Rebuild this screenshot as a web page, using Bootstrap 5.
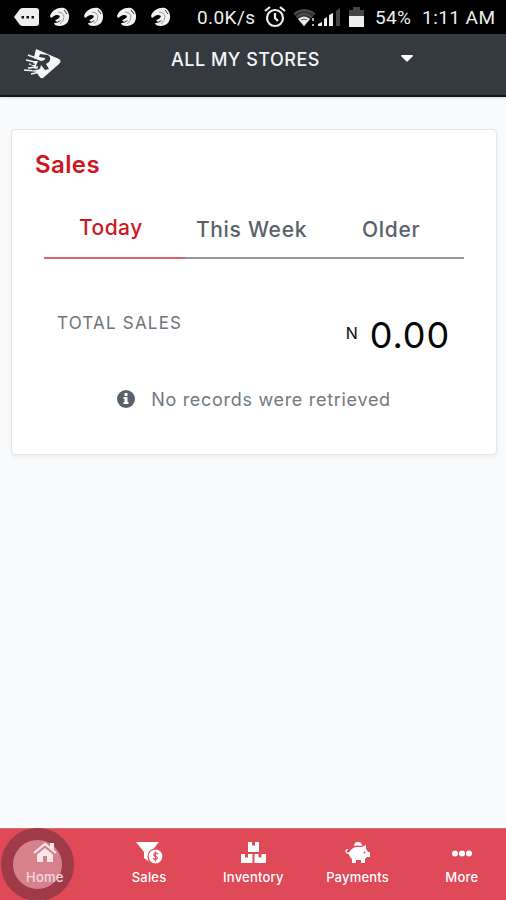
<!DOCTYPE html>
<html lang="en">
<head>
<meta charset="utf-8">
<meta name="viewport" content="width=device-width, initial-scale=1">
<title>Sales</title>
<link rel="stylesheet" href="https://cdn.jsdelivr.net/npm/bootstrap@5.3.0/dist/css/bootstrap.min.css">
<style>
body{font-family:Inter,"Open Sans",sans-serif;background:#f8fafc;line-height:1}
.screen{width:506px;height:900px}
svg{display:block;flex:none}
.status{height:34px;background:#000;color:#eee;font:19px/38px Roboto,sans-serif;padding-left:14px}
.status span{flex:none;padding-top:2px}
.speed{width:67px;margin-left:26px;letter-spacing:.4px}
.battery{width:47px;letter-spacing:.3px}
.clock{letter-spacing:.45px}
.topbar{height:63px;background:#343a40;border-bottom:2px solid #111519;color:#f5f6f7;padding-left:23px;box-shadow:0 1px 3px #0002}
.store{width:230px;margin-left:109px;font-size:18px;font-weight:450;letter-spacing:.5px;line-height:51px}
.panel{margin:32px 9px 0 11px;height:326px;border:1px solid #e3e5e7;border-radius:4px;box-shadow:0 2px 4px #0000000d}
.panel-title{color:#cf1620;font-size:24px;font-weight:600;letter-spacing:.4px;line-height:30px;padding:20px 0 0 23px;margin:0}
.periods{margin:22px 32px 0;height:57px}
.periods button{flex:1;border:0;border-bottom:2px solid #969a9e;background:none;color:#59616b;font-size:21px;font-weight:550;letter-spacing:.7px;padding:0 6px 0 0;white-space:nowrap}
.periods button.active{border-color:#d9636e;color:#cf1620;padding:0 7px 5px 0;letter-spacing:.5px}
.total{height:80px;margin-top:37px;padding:0 47px 0 45px}
.total-label{font-size:17px;color:#6c747c;line-height:54px;letter-spacing:1.2px}
.total-value{color:#060606;font-size:36px;line-height:79px;letter-spacing:.9px;margin-right:-1px}
.currency{font-size:16px;line-height:75px;margin-right:12px;color:#060606}
.notice{margin-top:14px;color:#737980;font-size:18px;line-height:20px;letter-spacing:.7px}
.tabs{height:72px;background:#e04958;border-top:1px solid #d66b76;color:#fff;overflow:hidden}
.tabs a{flex:0 0 104.25px;color:#fff;text-decoration:none;font-size:13px;font-weight:500;line-height:16px;letter-spacing:.2px;padding-top:12px;z-index:2}
.tabs a:first-child{margin-left:-7.3px;color:#eddcdf}
.tabs svg{margin-bottom:5px}
.touch{left:1px;bottom:-1px;width:73px;height:73px;border:12px solid #9f3b48;background:#d7818d;border-radius:50%;z-index:1}
</style>
</head>
<body>
<div class="screen d-flex flex-column position-relative overflow-hidden">
<svg width="0" height="0" class="position-absolute"><defs>
<g id="bird"><path d="M0 9C2 3 8 0 14 1C19 3 21 11 17 16C14 19 9 20 5 18L4 16Q9 16 11 13L7 15L5 13Q9 12 10 9Q7 7 4 9L1 11Z" fill="#f1f1f1"/><path d="M8 5Q13 5 14 9Q14 14 10 17" fill="none" stroke="#888" stroke-width=".8"/><path d="M14 3L17 7" stroke="#333"/></g>
</defs></svg>
<div class="status d-flex align-items-center">
<svg width="25" height="20" viewBox="0 0 25 20"><path d="M0 10L6 2Q7 1 9 1H22Q25 1 25 4V16Q25 19 22 19H9Q7 19 6 18Z" fill="#eee"/><path d="M7.5 9h2.500v2.500h-2.500zM12.500 9h2.500v2.500h-2.500zM17.500 9h2.500v2.500h-2.500z" fill="#111"/></svg>
<svg width="122" height="20" style="margin-left:11px"><use href="#bird"/><use href="#bird" x="34"/><use href="#bird" x="67"/><use href="#bird" x="101"/></svg>
<span class="speed" style="margin-left:25px">0.0K/s</span>
<svg width="22" height="22" viewBox="0 0 22 22" fill="none" stroke="#eee" stroke-width="2.2"><circle cx="11" cy="12" r="8"/><path d="M1 5L6 1M16 1L21 5M11 7V12L14 15"/></svg>
<svg width="48" height="21" viewBox="0 0 48 21" style="margin-left:7px"><path d="M1 7Q11-2 22 7L11 20Z" fill="#333"/><path d="M1 7Q11-1 22 7M4 10Q11 4 19 10" fill="none" stroke="#555" stroke-width="1.5"/><path d="M5 12Q11 7 17 12L11 19Z" fill="#eee"/><path d="M8 13Q11 11 14 13" fill="none" stroke="#555"/><path d="M19 11h2v3h-2zM19 17h2v2h-2z" fill="#aaa"/><path d="M25 19v-2l4-2v4zM31 19v-7l3-2v9zM36 19V8l4-2v13z" fill="#eee"/><path d="M43 19V4l4-3v18z" fill="#444"/></svg>
<svg width="15" height="22" viewBox="0 0 15 22" style="margin:0 11px 0 8px"><path d="M4 1h7v3h4v6H0V4h4z" fill="#444"/><path d="M0 10h15v11H0z" fill="#eee"/></svg>
<span class="battery">54%</span><span class="clock">1:11 AM</span>
</div>
<header class="topbar d-flex">
<svg width="39" height="31" viewBox="0 0 39 31" style="margin-top:15px"><path d="M13 0L36 10Q39 12 36 15L20 29Q18 30 16 27L12 21L10 12Z" fill="#f7f7f7"/><path d="M17 5L25 6Q29 9 26 13L23 15L26 20L22 21L18 16L17 20L12 19L15 12H10V9L18 12Q23 11 22 9L16 8Z" fill="#343a40"/><path d="M5 6L13 9M3 11L12 13M6 15L12 17M5 19L15 18M1 21L13 22M8 25L17 23" stroke="#f5f5f5" stroke-width="1.7"/><path d="M6 9L13 11M4 17L12 15M9 21L16 20" stroke="#343a40"/></svg>
<div class="store">ALL MY STORES</div>
<div class="pt-3"><svg width="12" height="18" viewBox="0 0 12 18"><path d="M0 6Q0 5 1 5H11Q12 5 12 6L7 11Q6 12 5 11Z" fill="#fff"/></svg></div>
</header>
<main class="flex-grow-1">
<section class="panel bg-white">
<h1 class="panel-title">Sales</h1>
<div class="periods d-flex"><button class="active">Today</button><button>This Week</button><button>Older</button></div>
<div class="total d-flex justify-content-between"><span class="total-label">TOTAL SALES</span><div class="d-flex"><span class="currency">N</span><span class="total-value">0.00</span></div></div>
<div class="notice d-flex justify-content-center"><svg width="18" height="18" viewBox="0 0 18 18" style="margin-right:16px"><circle cx="9" cy="9" r="9" fill="#59616b"/><path d="M7.5 3h3v3h-3zM6.5 7h4v5h1v2h-5v-2h1V9h-1z" fill="#fff"/></svg><span>No records were retrieved</span></div>
</section>
</main>
<nav class="tabs d-flex">
<a href="#" class="d-flex flex-column align-items-center"><svg width="24" height="23" viewBox="0 0 24 23"><path d="M1 12L12 3L23 12" stroke="#f4e8ea" stroke-width="2.2" fill="none"/><path d="M17 2h4v7l-4-3zM4 13.500L12 7L20 13.500V21H14V15H10V21H4Z" fill="#f4e8ea"/></svg>Home</a>
<a href="#" class="d-flex flex-column align-items-center"><svg width="27" height="23" viewBox="0 0 27 23"><path d="M0 1H23L15 11V22L8 17V11Z" fill="#fff"/><circle cx="19.5" cy="15.5" r="7.5" fill="#fff" stroke="#e04958" stroke-width="1.2"/><path d="M22 13Q19 11 18 13Q17 15 20 15.5Q22 16 21 18Q19 19 17 17.5M19.5 10.5V20.5" fill="none" stroke="#e04958" stroke-width="1.2"/></svg>Sales</a>
<a href="#" class="d-flex flex-column align-items-center"><svg width="25" height="23" viewBox="0 0 25 23"><path d="M7 1H11V5L12.5 4L14 5V1H18V11H7ZM0 13H4V17L5.5 16L7 17V13H11.5V22H0ZM13.5 13H17.5V17L19 16L20.5 17V13H25V22H13.5Z" fill="#fff"/></svg>Inventory</a>
<a href="#" class="d-flex flex-column align-items-center"><svg width="25" height="23" viewBox="0 0 25 23"><path d="M5 10Q8 6 12 6H17L21 4V8Q22 9 23 11H25V16H22L20 18V22H16V19H11V22H7V18Q4 16 4 12Z" fill="#fff"/><path d="M9 5Q9 1 13 1Q17 1 17 5Q13 4 9 5Z" fill="#fff"/><path d="M5 12Q1 13 1 10Q1 8 3 9" fill="none" stroke="#fff" stroke-width="1.3"/><circle cx="19.5" cy="11.5" r="1" fill="#e04958"/></svg>Payments</a>
<a href="#" class="d-flex flex-column align-items-center"><svg width="20" height="23" viewBox="0 0 20 23" fill="#fff"><circle cx="3" cy="12.5" r="3"/><circle cx="10" cy="12.5" r="3"/><circle cx="17" cy="12.5" r="3"/></svg>More</a>
</nav>
<div class="touch position-absolute"></div>
</div>
<script src="https://cdn.jsdelivr.net/npm/bootstrap@5.3.0/dist/js/bootstrap.bundle.min.js"></script>
</body>
</html>
